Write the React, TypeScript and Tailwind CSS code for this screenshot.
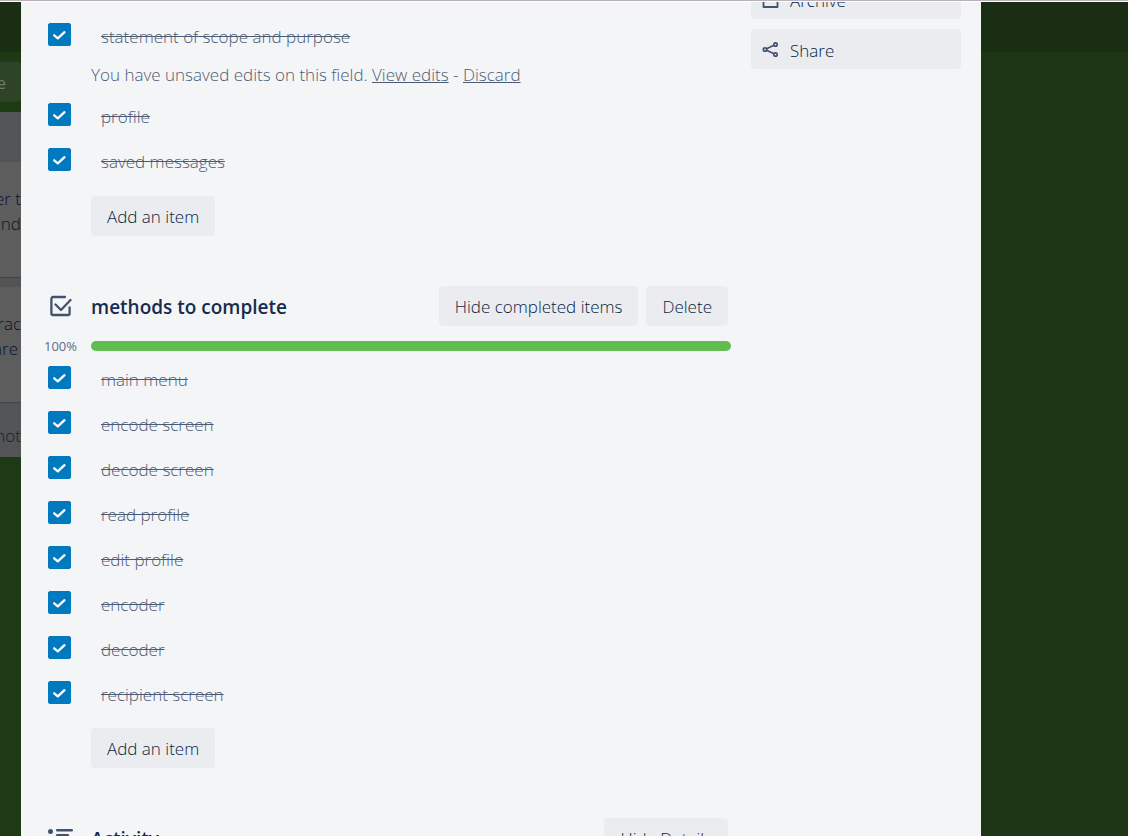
import { useState } from "react";

function Check() {
  return (
    <svg viewBox="0 0 23 23" className="pointer-events-none absolute inset-0 size-full" fill="none" stroke="#fff" strokeWidth="2.3" strokeLinecap="round" strokeLinejoin="round" aria-hidden="true">
      <path d="M6.2 12.3 L9.8 15.4 L16.5 9.2" />
    </svg>
  );
}

function Item({ label, note }: { label: string; note?: boolean }) {
  const [done, setDone] = useState(true);
  return (
    <li>
      <label className="flex h-[45px] items-start">
        <span className="relative mt-1 block h-[23px] w-[23px] shrink-0">
          <input
            type="checkbox"
            checked={done}
            onChange={() => setDone(!done)}
            className="block size-full appearance-none rounded-xs border border-[#dfe1e6] bg-white checked:border-[#0079bf] checked:bg-[#0079bf]"
          />
          {done && <Check />}
        </span>
        <span className={done ? "ml-[30px] pt-[6px] leading-6 text-[#4c5b75] line-through" : "ml-[30px] pt-[6px] leading-6"}>{label}</span>
      </label>
      {note && (
        <p className="-mt-1 mb-[9px] pl-[43px] leading-[30px] text-[#4c5b75]">
          You have unsaved edits on this field.{" "}
          <a href="#edits" className="underline">View edits</a> -{" "}
          <a href="#discard" className="underline">Discard</a>
        </p>
      )}
    </li>
  );
}

const button = "h-10 shrink-0 rounded-[4px] bg-[#eaecf0] px-4 pt-px whitespace-nowrap text-[#091e42]";

function BoardEdge() {
  return (
    <aside className="flex w-[21px] shrink-0 flex-col overflow-hidden bg-[#1e3a14] whitespace-nowrap text-[#091226]">
      <div className="h-[50px] shrink-0 bg-[#1a2e13]" />
      <div className="flex h-[60px] shrink-0 items-center bg-[#1e3a14]">
        <span className="flex h-10 w-full items-center justify-end rounded-r-[4px] bg-[#2d4427] pt-px pr-[15px] font-normal text-[#6f7a6b]">e</span>
      </div>
      <div className="flex h-[345px] shrink-0 flex-col bg-[#535456]">
        <div className="mt-[50px] flex h-[116px] shrink-0 flex-col items-end border-b border-[#3f444d] bg-[#5d5d5d] pt-6 leading-[25px]">
          <span>other t</span>
          <span>and</span>
        </div>
        <div className="mt-[9px] flex h-[116px] shrink-0 flex-col items-end border-b border-[#3f444d] bg-[#5d5d5d] pt-6 leading-[25px]">
          <span>charac</span>
          <span className="pr-[3px]">are</span>
        </div>
        <div className="flex flex-1 items-center justify-end pt-3 text-[#1b212c]">Add anot</div>
      </div>
    </aside>
  );
}

export default function App() {
  return (
    <div className="flex h-screen flex-col overflow-hidden border-t border-[#b9b3b9] bg-white pt-px font-['Open_Sans','Noto_Sans',sans-serif] text-[17px] font-light">
      <div className="flex min-h-0 flex-1">
        <BoardEdge />
        <main className="flex min-w-0 flex-1 items-start overflow-hidden bg-[#f4f5f7] pr-5 pl-[27px]">
          <div className="min-w-0 flex-1">
            <ul className="mt-[17px]">
              <Item label="statement of scope and purpose" note />
              <Item label="profile" />
              <Item label="saved messages" />
            </ul>
            <button className={`${button} mt-[7px] ml-[43px]`}>Add an item</button>

            <section className="mt-[50px]">
              <header className="flex items-center pr-[23px]">
                <svg width="24" height="24" viewBox="0 0 24 24" className="mr-[19px] shrink-0" fill="none" stroke="#42526e" strokeWidth="2.3" strokeLinecap="round" strokeLinejoin="round" aria-hidden="true">
                  <path d="M17 3H5a1.6 1.6 0 0 0-1.6 1.6V19.4a1.6 1.6 0 0 0 1.6 1.6H20a1.6 1.6 0 0 0 1.6-1.6V13.5" />
                  <path d="M7.5 10.5l5.5 5.5L22.5 6" />
                </svg>
                <h2 className="flex-1 pt-[2px] text-[19px] font-semibold text-[#172b4d]">methods to complete</h2>
                <button className={button}>Hide completed items</button>
                <button className={`${button} ml-2`}>Delete</button>
              </header>
              <div className="mt-[10px] flex h-5 items-center pr-5">
                <span className="-ml-1 w-[47px] pt-px text-[13px] font-normal text-[#5e6c84]">100%</span>
                <div className="h-[10px] flex-1 rounded-full bg-[#61bd4f]" role="progressbar" aria-valuenow={100} aria-label="methods to complete" />
              </div>
              <ul className="mt-[6px]">
                <Item label="main menu" />
                <Item label="encode screen" />
                <Item label="decode screen" />
                <Item label="read profile" />
                <Item label="edit profile" />
                <Item label="encoder" />
                <Item label="decoder" />
                <Item label="recipient screen" />
              </ul>
              <button className={`${button} mt-[6px] ml-[43px]`}>Add an item</button>
            </section>

            <header className="mt-[50px] flex items-center pr-[23px]">
              <svg width="26" height="20" viewBox="0 0 26 20" className="mr-[17px] shrink-0" fill="#42526e" aria-hidden="true">
                <circle cx="2.5" cy="3.5" r="2.5" />
                <rect x="8" y="1" width="17" height="2.5" rx="1.2" />
                <rect x="8" y="6" width="13" height="2.5" rx="1.2" />
                <circle cx="2.5" cy="13.5" r="2.5" />
                <rect x="8" y="11" width="17" height="2.5" rx="1.2" />
                <rect x="8" y="16" width="13" height="2.5" rx="1.2" />
              </svg>
              <h2 className="flex-1 pt-[2px] text-[19px] font-semibold text-[#172b4d]">Activity</h2>
              <button className={button}>Hide Details</button>
            </header>
          </div>
          <nav className="-mt-[23px] flex w-[210px] shrink-0 flex-col gap-[10px] text-[#091e42]">
            <button className="flex h-10 items-center gap-[11px] rounded-[4px] bg-[#eaecf0] pt-[3px] pl-[11px]">
              <svg width="17" height="17" viewBox="0 0 17 17" fill="none" stroke="#42526e" strokeWidth="1.8" strokeLinejoin="round" aria-hidden="true">
                <path d="M1 1h15v4H1zM1.5 5v10h14V5M6 8h5" />
              </svg>
              Archive
            </button>
            <button className="flex h-10 items-center gap-[11px] rounded-[4px] bg-[#eaecf0] pt-[3px] pl-[11px]">
              <svg width="17" height="17" viewBox="0 0 17 17" fill="none" stroke="#42526e" strokeWidth="1.7" aria-hidden="true">
                <circle cx="3" cy="7.5" r="1.7" />
                <circle cx="13.5" cy="2.5" r="1.7" />
                <circle cx="13.5" cy="12.5" r="1.7" />
                <path d="M4.6 6.7l7.3-3.4M4.6 8.3l7.3 3.4" />
              </svg>
              Share
            </button>
          </nav>
        </main>
        <aside className="flex w-[147px] shrink-0 flex-col bg-[#1e3615]">
          <div className="h-[50px] bg-[#1a2e13]" />
        </aside>
      </div>
    </div>
  );
}
